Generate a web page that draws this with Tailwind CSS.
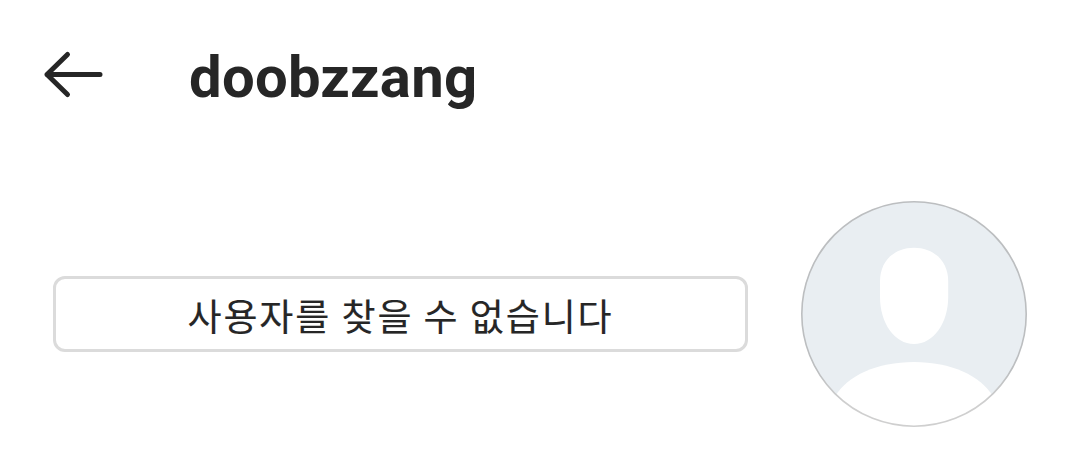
<!DOCTYPE html>
<html lang="ko">
<head>
    <meta charset="UTF-8">
    <meta name="viewport" content="width=device-width, initial-scale=1.0">
    <title>doobzzang</title>
    <script src="https://cdn.jsdelivr.net/npm/@tailwindcss/browser@4"></script>
</head>
<body class="bg-white text-[#262626] overflow-hidden">
    <header class="flex items-center h-[150px] pl-[43px]">
        <button aria-label="Back">
            <svg class="block w-[62px] h-[50px]" viewBox="0 0 62 50" fill="none" stroke="currentColor" stroke-width="5" stroke-linecap="round" stroke-linejoin="round">
                <path d="M24.5 4.5 4 24.5l20.5 20M4 24.5h53"/>
            </svg>
        </button>
        <h1 class="ml-[84px] mt-[3px] font-['Roboto',sans-serif] font-bold text-[58px] leading-[70px] tracking-[0.25px]">doobzzang</h1>
    </header>

    <main class="flex items-center justify-between pl-[53px] pr-[38px] pt-[51px]">
        <div class="w-[695px] h-[76px] border-3 border-[#dbdbdb] rounded-[12px] flex items-center justify-center">
            <span class="pt-px font-['Noto_Sans_CJK_KR',sans-serif] text-[37px] leading-[50px] tracking-[1.9px] [word-spacing:-2px] [-webkit-text-stroke:0.15px_#262626] whitespace-nowrap">사용자를 찾을 수 없습니다</span>
        </div>

        <svg class="block w-[226px] h-[226px]" viewBox="0 0 226 226">
            <defs>
                <clipPath id="avatar"><circle cx="113" cy="113" r="112.5"/></clipPath>
                <linearGradient id="ring" x1="0" y1="0" x2="0" y2="1">
                    <stop offset="0.75" stop-color="#bcbec0"/>
                    <stop offset="0.9" stop-color="#cfcfcf"/>
                </linearGradient>
            </defs>
            <g clip-path="url(#avatar)">
                <rect width="226" height="226" fill="#e9eef2"/>
                <path fill="#fff" d="M113 46.7c20 0 34.2 13.8 34.2 33.3v16c0 26-14.7 47-34.2 47S79 122 79 96V80c0-19.5 14-33.3 34-33.3Z"/>
                <path fill="#fff" d="M34.5 195C46 175 76 161 113 161s67 14 78.5 34v31h-157Z"/>
                <path fill="#fff" d="M20 195h186v31H20Z"/>
            </g>
            <circle cx="113" cy="113" r="112.2" fill="none" stroke="url(#ring)" stroke-width="1.6"/>
        </svg>
    </main>
</body>
</html>
